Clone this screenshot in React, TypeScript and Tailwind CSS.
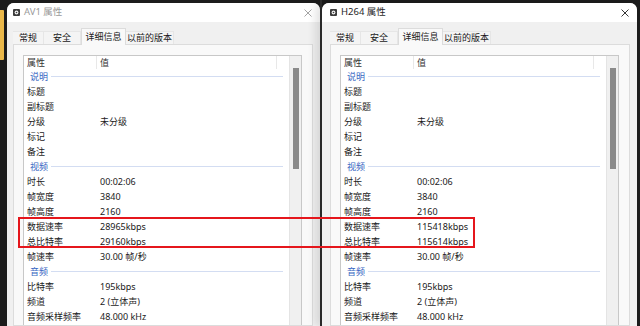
type Row = { group: string } | { name: string; value: string }

function rowsFor(rate: string, total: string): Row[] {
	return [
		{ group: '说明' },
		{ name: '标题', value: '' },
		{ name: '副标题', value: '' },
		{ name: '分级', value: '未分级' },
		{ name: '标记', value: '' },
		{ name: '备注', value: '' },
		{ group: '视频' },
		{ name: '时长', value: '00:02:06' },
		{ name: '帧宽度', value: '3840' },
		{ name: '帧高度', value: '2160' },
		{ name: '数据速率', value: rate },
		{ name: '总比特率', value: total },
		{ name: '帧速率', value: '30.00 帧/秒' },
		{ group: '音频' },
		{ name: '比特率', value: '195kbps' },
		{ name: '频道', value: '2 (立体声)' },
		{ name: '音频采样频率', value: '48.000 kHz' },
	]
}

function FileIcon() {
	return (
		<svg width="7" height="7" viewBox="0 0 7 7" className="shrink-0">
			<rect x="0" y="0" width="7" height="7" rx="1" fill="#3a3a3a" />
			<circle cx="3.5" cy="3.5" r="1.9" fill="#f2f2f2" />
			<circle cx="3.5" cy="3.5" r="0.8" fill="#3a3a3a" />
		</svg>
	)
}

function CloseIcon({ active }: { active: boolean }) {
	return (
		<svg width="8" height="8" viewBox="0 0 8 8" className="shrink-0">
			<path d="M0.5 0.5 L7.5 7.5 M7.5 0.5 L0.5 7.5" stroke={active ? '#1f1f1f' : '#9a9a9a'} strokeWidth="0.9" />
		</svg>
	)
}

type WindowProps = {
	title: string
	active: boolean
	wide: boolean
	rate: string
	total: string
}

function PropWindow({ title, active, wide, rate, total }: WindowProps) {
	const rows = rowsFor(rate, total)
	const tabs = ['常规', '安全', '详细信息', '以前的版本']
	const tabWidths = ['w-[31px]', 'w-[37px]', 'w-[45px]', 'w-[48px]']
	return (
		<div
			className={
				wide
					? 'relative z-10 mt-[3px] flex h-[323px] w-[315px] shrink-0 flex-col overflow-hidden rounded-t-[7px] bg-[#f0f0f0] shadow-[-6px_0_10px_rgba(0,0,0,0.12)]'
					: 'mt-[3px] flex h-[323px] w-[313px] shrink-0 flex-col overflow-hidden rounded-t-[7px] bg-[#f0f0f0]'
			}
		>
			<div
				className={
					wide
						? 'flex h-[19px] shrink-0 items-center bg-white pl-[8px] pr-[8px]'
						: 'flex h-[19px] shrink-0 items-center bg-white pl-[6px] pr-[8px]'
				}
			>
				<FileIcon />
				<span className={active ? 'ml-[4px] text-[9.5px] text-[#1f1f1f]' : 'ml-[4px] text-[9.5px] text-[#9a9a9a]'}>{title}</span>
				<div className="flex-1" />
				<CloseIcon active={active} />
			</div>

			<div className={wide ? 'flex min-h-0 flex-1 flex-col pl-[2px]' : 'flex min-h-0 flex-1 flex-col'}>
				<div className="mt-[6px] flex h-[16px] shrink-0 items-end pl-[6px]">
					{tabs.map((t, i) =>
						i === 2 ? (
							<div
								key={t}
								className={`relative z-10 -mb-px flex h-[17px] items-center justify-center border border-b-0 border-[#dcdcdc] bg-[#f9f9f9] text-[9px] text-[#1a1a1a] ${tabWidths[i]}`}
							>
								{t}
							</div>
						) : (
							<div
								key={t}
								className={`flex h-[13px] items-center justify-center border-t border-r border-[#e6e6e6] bg-[#f4f4f4] text-[9px] text-[#1a1a1a] ${tabWidths[i]}`}
							>
								{t}
							</div>
						),
					)}
				</div>

				<div className="ml-[6px] mr-[7px] flex min-h-0 flex-1 flex-col overflow-hidden border border-[#dcdcdc] bg-[#f9f9f9] pl-[9px] pr-[10px] pt-[10px]">
					<div className="flex min-h-0 flex-1 border border-b-0 border-[#c8c8c8] bg-white">
						<div className="flex-1">
							<div className="flex h-[13px] items-center text-[9px] text-[#333]">
								<div className="flex h-full w-[73px] items-center border-r border-[#e8e8e8] pl-[3px]">属性</div>
								<div className="flex h-full w-[180px] items-center border-r border-[#e8e8e8] pl-[3px]">值</div>
							</div>
							{rows.map((r, i) =>
								'group' in r ? (
									<div key={i} className="flex h-[15px] items-center pl-[6px] pr-[6px]">
										<span className="text-[9px] text-[#3566c2]">{r.group}</span>
										<div className="ml-[3px] h-px flex-1 bg-[#d3ddf2]" />
									</div>
								) : (
									<div key={i} className="flex h-[15px] items-center text-[9px] text-[#1a1a1a]">
										<div className="w-[76px] pl-[3px]">{r.name}</div>
										<div>{r.value}</div>
									</div>
								),
							)}
						</div>
						<div className="w-[12px] shrink-0 border-l border-[#e4e4e4] bg-[#f0f0f0] pl-[3px] pt-[12px]">
							<div className="h-[101px] w-[6px] bg-[#8a8a8a]" />
						</div>
					</div>
				</div>
			</div>
		</div>
	)
}

export default function App() {
	return (
		<div
			className="relative flex h-[326px] w-[640px] overflow-hidden bg-[#1c1c1c]"
			style={{ fontFamily: '"Noto Sans", "Noto Sans CJK SC", sans-serif' }}
		>
			<div className="w-[7px] shrink-0 pt-[10px]">
				<div className="h-[50px] w-[4px] rounded-r-[1px] bg-[#eab84a]" />
			</div>
			<PropWindow title="AV1 属性" active={false} wide={false} rate="28965kbps" total="29160kbps" />
			<div className="w-[2px] shrink-0 bg-[#2e2e2e]" />
			<PropWindow title="H264 属性" active wide rate="115418kbps" total="115614kbps" />
			<div className="absolute left-[18px] top-[217px] z-20 h-[31px] w-[457px] border-2 border-[#e5161c]" />
		</div>
	)
}
